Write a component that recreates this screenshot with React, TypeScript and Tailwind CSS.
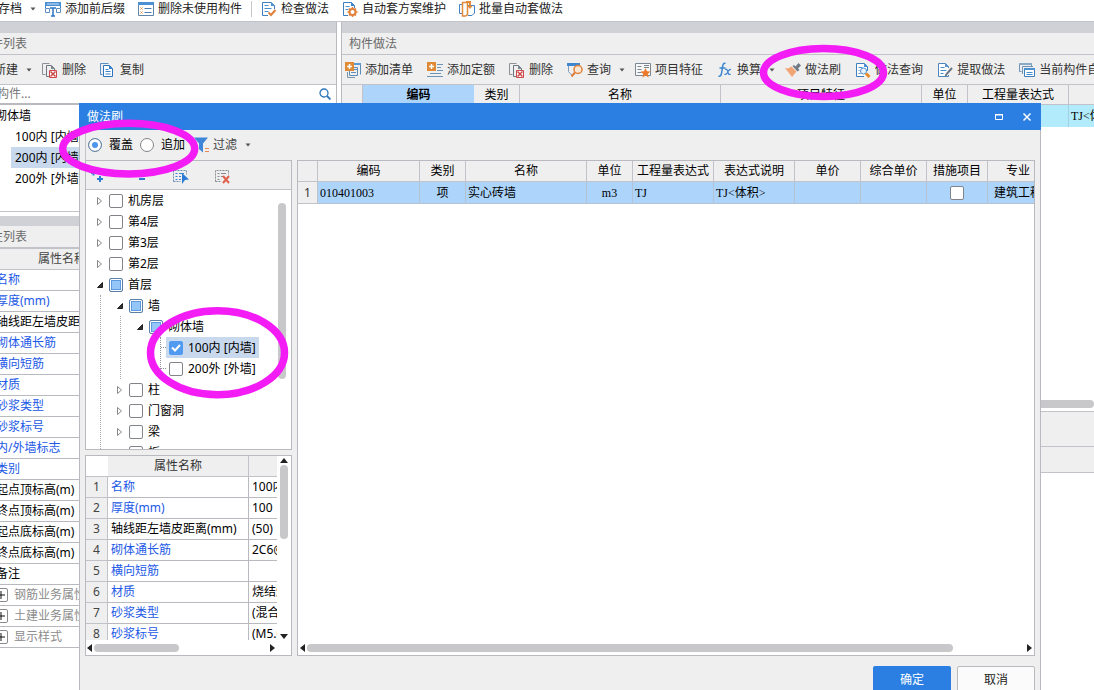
import { useState, type ReactNode } from "react";

interface TreeNode {
  label: string;
  state?: "checked" | "partial";
  selected?: boolean;
  leaf?: boolean;
  children?: TreeNode[];
}

const tree: TreeNode[] = [
  { label: "机房层" },
  { label: "第4层" },
  { label: "第3层" },
  { label: "第2层" },
  {
    label: "首层",
    state: "partial",
    children: [
      {
        label: "墙",
        state: "partial",
        children: [
          {
            label: "砌体墙",
            state: "partial",
            children: [
              { label: "100内 [内墙]", state: "checked", selected: true, leaf: true },
              { label: "200外 [外墙]", leaf: true },
            ],
          },
        ],
      },
      { label: "柱" },
      { label: "门窗洞" },
      { label: "梁" },
      { label: "板" },
    ],
  },
];

const sideProps = [
  { name: "名称", blue: true },
  { name: "厚度(mm)", blue: true },
  { name: "轴线距左墙皮距离(mm)", blue: false },
  { name: "砌体通长筋", blue: true },
  { name: "横向短筋", blue: true },
  { name: "材质", blue: true },
  { name: "砂浆类型", blue: true },
  { name: "砂浆标号", blue: true },
  { name: "内/外墙标志", blue: true },
  { name: "类别", blue: true },
  { name: "起点顶标高(m)", blue: false },
  { name: "终点顶标高(m)", blue: false },
  { name: "起点底标高(m)", blue: false },
  { name: "终点底标高(m)", blue: false },
  { name: "备注", blue: false },
];

const sideGroups = ["钢筋业务属性", "土建业务属性", "显示样式"];

const dialogProps = [
  { name: "名称", value: "100内 [内墙]", blue: true },
  { name: "厚度(mm)", value: "100", blue: true },
  { name: "轴线距左墙皮距离(mm)", value: "(50)", blue: false },
  { name: "砌体通长筋", value: "2C6@600", blue: true },
  { name: "横向短筋", value: "", blue: true },
  { name: "材质", value: "烧结煤矸石砖", blue: true },
  { name: "砂浆类型", value: "(混合砂浆)", blue: true },
  { name: "砂浆标号", value: "(M5.0)", blue: true },
];

function Icon({ children }: { children: ReactNode }) {
  return (
    <svg className="w-4 h-4 shrink-0" viewBox="0 0 16 16" fill="none" aria-hidden="true">
      {children}
    </svg>
  );
}

function Caret() {
  return (
    <svg className="w-1.5 h-1 ml-1 -mr-1 shrink-0" viewBox="0 0 6 4" aria-hidden="true">
      <path d="M0.5 0.5h5L3 3.5z" fill="#555" />
    </svg>
  );
}

const PrefixIcon = () => (
  <Icon>
    <path d="M0.500 7V1.500h15V7" stroke="#3f86c6" />
    <path d="M0 1h16v4H0z" fill="#4a90d2" />
    <path d="M2 3h12" stroke="#cfe3f5" />
    <path d="M0.500 7.500h4v4h-4zM11.500 7.500h4v4h-4z" stroke="#5b8fc0" />
    <path d="M5 7h6M8 7v8M6 15h4" stroke="#2c76c4" strokeWidth="1.500" />
  </Icon>
);

const UnusedIcon = () => (
  <Icon>
    <path d="M0.500 1.500h15v13H0.500z" fill="#fff" stroke="#5f86a8" />
    <path d="M0 1h16v3H0z" fill="#4a90d2" />
    <path d="M2.500 6.500l2 2m0-2l-2 2M2.500 10.500l2 2m0-2l-2 2" stroke="#e08a45" />
    <path d="M6.500 7.500h7M6.500 11.500h7" stroke="#4a7fb5" />
  </Icon>
);

const CheckDocIcon = () => (
  <Icon>
    <path d="M13.500 8V4.500L10 1.500H1.500v13H7" fill="#fff" stroke="#3f7fc0" />
    <path d="M10 1v4h4z" fill="#4a90d2" />
    <path d="M3.500 4.500h4M3.500 7.500h7M3.500 10.500h4" stroke="#4a8fd0" />
    <path d="M7.500 11.500l2.500 2.500 4.500-5" stroke="#e2803a" strokeWidth="2" />
  </Icon>
);

const GearDocIcon = () => (
  <Icon>
    <path d="M12.500 7V4.500L9.500 1.500h-8v13H6" fill="#fff" stroke="#3f7fc0" />
    <path d="M9 1v4h4z" fill="#3f86d0" />
    <path d="M3.500 5.500h4M3.500 8.500h3" stroke="#4a8fd0" />
    <circle cx="10.500" cy="11" r="3" stroke="#e2803a" strokeWidth="2" />
    <path d="M10.500 6v2M10.500 14v2M5.500 11h2M13.500 11h2M7 7.500l1.500 1.500M12.500 13l1.500 1.500M14 7.500L12.500 9M8.500 13L7 14.500" stroke="#e2803a" strokeWidth="1.500" />
  </Icon>
);

const BatchIcon = () => (
  <Icon>
    <path d="M3.500 3.500h-3v9h3M9 4.500h6.500V12l-2.500 2.500H9" stroke="#4383c4" />
    <path d="M3.500 1.500h5v12l-2 1.500h-3z" fill="#fff" stroke="#e08a3a" strokeWidth="1.500" />
    <path d="M7 1h4v4" stroke="#e08a3a" strokeWidth="2" />
    <path d="M8.500 5h5L11 8z" fill="#e08a3a" />
  </Icon>
);

const DeleteIcon = () => (
  <Icon>
    <path d="M3.500 12.500h-3v-11h7" stroke="#8b9299" />
    <path d="M4.500 14.500h3M4.500 14.500v-11h5l3 3V8" stroke="#6e7780" />
    <path d="M9 3v4h4z" fill="#7d8790" />
    <path d="M7.500 8.500h7v7h-7z" fill="#fff" stroke="#cc4a4a" />
    <path d="M8.500 9.500l5 5m0-5l-5 5" stroke="#cc4a4a" strokeWidth="1.500" />
  </Icon>
);

const CopyIcon = () => (
  <Icon>
    <path d="M2.500 12.500h-2v-11h8" stroke="#5b8fc5" />
    <path d="M3.500 3.500h6l3 3v8h-9z" fill="#fff" stroke="#2f73bd" />
    <path d="M5.500 7.500h3M5.500 9.500h5M5.500 12h5" stroke="#3c82cc" />
    <path d="M9 3v4h4z" fill="#3c82cc" />
  </Icon>
);

const AddListIcon = () => (
  <Icon>
    <path d="M9 2.500h6.500v10M4.500 9v4.500h8V5.500H9" stroke="#5c8db8" />
    <path d="M2.500 10v5.500H10" stroke="#7a93a8" />
    <path d="M9 7.500h3M6 10.500h5" stroke="#5c8db8" />
    <path d="M8 1h8v2H8z" fill="#5c9bd5" />
    <path d="M0 0h9v9H0z" fill="#e08a35" />
    <path d="M4.500 2v5M2 4.500h5" stroke="#fff" strokeWidth="1.500" />
  </Icon>
);

const AddQuotaIcon = () => (
  <Icon>
    <path d="M10 2.500h6M10 5.500h4M10 8.500h6M3 11.500h11M0 14.500h16" stroke="#6f93b5" />
    <path d="M0 0h9v9H0z" fill="#e08a35" />
    <path d="M4.500 2v5M2 4.500h5" stroke="#fff" strokeWidth="1.500" />
  </Icon>
);

const QueryIcon = () => (
  <Icon>
    <path d="M0 1h13v3H0z" fill="#3f86d0" />
    <path d="M1.500 4v5.500l2.500 3h1" stroke="#7b9cba" />
    <circle cx="11" cy="7.500" r="4" fill="#fbe7d6" stroke="#e0803a" strokeWidth="1.500" />
    <path d="M8 10.500L4.500 14.500" stroke="#e0803a" strokeWidth="2" />
  </Icon>
);

const FeatureIcon = () => (
  <Icon>
    <path d="M0.500 1.500h15v12H0.500z" fill="#f8f8f8" stroke="#7b8791" />
    <path d="M2.500 4.500h4M2.500 7.500h4M2.500 10.500h4M9 3.500h5M9 5.500h5" stroke="#7b8791" />
    <path d="M10.500 6l1.500 3.200 3.500.3-2.700 2.400.9 3.600-3.200-1.900-3.100 1.900.8-3.600L5.500 9.500 9 9.200z" fill="#ec7a2d" />
  </Icon>
);

const FxIcon = () => (
  <Icon>
    <path d="M8.500 1.500C6.500 .5 6 2.500 5.500 5L4.500 11.500c-.5 2.500-1.500 3-3 2.500M2.500 6h6" stroke="#3c86cf" strokeWidth="1.500" />
    <path d="M8 7.500c2-1 2.500 1 3 3s1.500 2.500 2.500 1.500M14 7.500c-2-.5-2.500 1.500-3.500 3S8.500 13 7.500 12" stroke="#3c86cf" strokeWidth="1.200" />
  </Icon>
);

const BrushIcon = () => (
  <Icon>
    <path d="M0 6l3 .5L6.500 4.500l5 5L7 15z" fill="#f2a574" />
    <path d="M7.500 4l1.500-1 1.500 1.500L13.500 1 16 3.500l-3 3L14.500 8l-2 1.500z" fill="#6f7a84" />
  </Icon>
);

const MethodQueryIcon = () => (
  <Icon>
    <path d="M12.500 9V4.500L9.500 1.500h-8v13H9" fill="#fff" stroke="#3f7fc0" />
    <path d="M9 1v4h4z" fill="#4a90d2" />
    <path d="M3.500 5.500h4M3.500 8.500h1M3.500 11.500h2" stroke="#4a8fd0" />
    <circle cx="8.500" cy="9" r="3" fill="#eaf3fc" stroke="#4a8fd0" />
    <path d="M11 11.500l3.500 3.500" stroke="#ec8a2d" strokeWidth="3" />
  </Icon>
);

const ExtractIcon = () => (
  <Icon>
    <path d="M11.500 6V4.500L8.500 1.500h-7v13h10V13" fill="#fff" stroke="#4f86bd" />
    <path d="M8 1v4h4z" fill="#5b93cc" />
    <path d="M3.500 5.500h4M3.500 8.500h6M3.500 11.500h3" stroke="#4a8fd0" />
    <path d="M15 6l-5 5.500-1.500 2.500" stroke="#6e7780" strokeWidth="2" />
  </Icon>
);

const CurrentIcon = () => (
  <Icon>
    <path d="M2.500 9.500h-2v-8h12v3" stroke="#6f93b5" />
    <path d="M0 1h13v2H0z" fill="#8aa9c6" />
    <path d="M3.500 12V4.500H14" stroke="#6f93b5" />
    <path d="M5.500 6.500h10v8h-10z" fill="#fff" stroke="#3f7fc0" />
    <path d="M5 6h11v2H5z" fill="#4a90d2" />
    <path d="M7.500 10.500h6M7.500 12.500h6" stroke="#4a8fd0" />
  </Icon>
);

const FilterIcon = () => (
  <Icon>
    <path d="M1 0.500h14L10 6.500v9L6 12V6.500z" fill="#3f86d8" />
    <path d="M12 11.500h4M12 14.500h4" stroke="#e8884c" />
  </Icon>
);

const SelectTreeIcon = () => (
  <Icon>
    <path d="M0.500 12.500v-11h13v4M0.500 12.500h7" stroke="#6b8fb0" strokeDasharray="2 1" />
    <path d="M2.500 4.500h2M6 4.500h5M2.500 7.500h2M6 7.500h2M2.500 10.500h2M6 10.500h2" stroke="#3f86d0" />
    <path d="M9 4l7 6.500-4 .5-3 4z" fill="#2c7cd6" />
  </Icon>
);

const ClearTreeIcon = () => (
  <Icon>
    <path d="M0.500 12.500v-11h13v4M0.500 12.500h6" stroke="#858b90" strokeDasharray="2 1" />
    <path d="M2.500 4.500h2M6 4.500h5M2.500 7.500h2M6 7.500h2M2.500 10.500h2" stroke="#858b90" />
    <path d="M8 7l6 7m0-7l-6 7" stroke="#e0604e" strokeWidth="2" />
  </Icon>
);

const ExpandIcon = () => (
  <Icon>
    <path d="M2 4h5M4.500 1.500v5" stroke="#2c7cd6" strokeWidth="2" />
    <path d="M8 10h6M11 7v6" stroke="#2c7cd6" strokeWidth="2" />
  </Icon>
);

const CollapseIcon = () => (
  <Icon>
    <path d="M8 10h6" stroke="#2c7cd6" strokeWidth="2" />
  </Icon>
);

function Tool({ icon, label, caret }: { icon?: ReactNode; label: string; caret?: boolean }) {
  return (
    <button type="button" className="flex items-center gap-1 shrink-0 whitespace-nowrap">
      {icon}
      <span>{label}</span>
      {caret && <Caret />}
    </button>
  );
}

function Arrow({ dir }: { dir: "left" | "right" | "up" | "down" }) {
  const paths = {
    left: "M6 0v8L1 4z",
    right: "M2 0v8l5-4z",
    up: "M0 6h8L4 1z",
    down: "M0 2h8L4 7z",
  };
  return (
    <svg className="w-2 h-2 shrink-0" viewBox="0 0 8 8" aria-hidden="true">
      <path d={paths[dir]} fill="#222" />
    </svg>
  );
}

function CheckBox({ state, label }: { state?: "checked" | "partial"; label?: string }) {
  const [checked, setChecked] = useState(state === "checked");
  return (
    <span className="grid shrink-0 place-items-center">
      <input
        type="checkbox"
        aria-label={label}
        checked={checked}
        onChange={(e) => setChecked(e.target.checked)}
        className={
          state === "partial"
            ? "[grid-area:1/1] appearance-none w-3.5 h-3.5 rounded-xs border border-[#5c80a8] bg-[#94c6fa] shadow-[inset_0_0_0_1px_#fff,inset_0_0_0_2px_#5c9ae0]"
            : "[grid-area:1/1] appearance-none w-3.5 h-3.5 rounded-xs border border-[#808488] bg-white checked:bg-[#519af2] checked:border-[#519af2]"
        }
      />
      {checked && (
        <svg className="[grid-area:1/1] w-2.5 h-2.5 pointer-events-none" viewBox="0 0 10 10" aria-hidden="true">
          <path d="M1 4.500l3 3L9 2" fill="none" stroke="#fff" strokeWidth="2" />
        </svg>
      )}
    </span>
  );
}

function TreeItem({ node }: { node: TreeNode }) {
  const leafParent = node.children?.some((c) => c.leaf);
  return (
    <li>
      <div className={node.leaf ? "flex items-center h-[21px]" : "flex items-center h-[21px] pl-2.5"}>
        {node.leaf ? (
          <span className="w-[5px] border-t border-dotted border-[#8a8f98]" />
        ) : (
          <svg className="w-2.5 h-2.5 shrink-0" viewBox="0 0 10 10" aria-hidden="true">
            {node.children ? (
              <path d="M6.500 2.500v5h-5z" fill="#333" stroke="#222" />
            ) : (
              <path d="M1.500 1.500v7l4-3.500z" fill="#fff" stroke="#888" />
            )}
          </svg>
        )}
        <label
          className={
            node.selected
              ? "flex items-center gap-[5px] h-[21px] px-[3px] bg-[#c8d9ee] whitespace-nowrap"
              : "flex items-center gap-[5px] h-[21px] px-[3px] whitespace-nowrap"
          }
        >
          <CheckBox state={node.state} />
          {node.label}
        </label>
      </div>
      {node.children && (
        <ul
          className={
            leafParent
              ? "ml-[34px] border-l border-dotted border-[#8a8f98]"
              : "ml-[14px] pl-[5px] border-l border-dotted border-[#a5a9ae]"
          }
        >
          {node.children.map((child) => (
            <TreeItem key={child.label} node={child} />
          ))}
        </ul>
      )}
    </li>
  );
}

function LeftColumn() {
  return (
    <div className="w-[369px] shrink-0 flex flex-col border-r border-[#b9babf]">
      <section>
        <div className="h-[11px] bg-[#d0d1d6]" />
        <h2 className="h-[22px] pl-[11px] flex items-center bg-[#efefef] border-b border-[#c2c3c8] text-[#6a6a6a]">
          构件列表
        </h2>
        <div className="h-[30px] pl-[26px] flex items-center gap-3.5 bg-[#efefef] border-b border-[#c2c3c8] text-[#333]">
          <Tool label="新建" caret />
          <Tool icon={<DeleteIcon />} label="删除" />
          <Tool icon={<CopyIcon />} label="复制" />
        </div>
        <div className="h-[20px] pl-[5px] pr-[5px] flex items-center border-b-2 border-[#b9babf]">
          <input
            type="text"
            aria-label="搜索构件"
            placeholder="搜索构件..."
            className="flex-1 min-w-0 outline-none placeholder:text-[#777]"
          />
          <svg className="w-3 h-3" viewBox="0 0 12 12" fill="none" stroke="#2c76b8" aria-hidden="true">
            <circle cx="5" cy="5" r="4" strokeWidth="1.300" />
            <path d="M8 8l3.500 3.500" strokeWidth="1.800" />
          </svg>
        </div>
        <ul className="pb-[22px] border-b border-[#c2c3c8] text-black">
          <li className="h-[21px] pl-[27px] flex items-center">砌体墙</li>
          <li className="h-[21px] pl-[47px] flex items-center">100内 [内墙]</li>
          <li className="h-[21px] ml-[43px] mr-[200px] pl-1 flex items-center bg-[#c8d9ee]">200内 [内墙]</li>
          <li className="h-[21px] pl-[47px] flex items-center">200外 [外墙]</li>
        </ul>
      </section>

      <section className="mt-1 flex-1">
        <div className="h-[10px] bg-[#d0d1d6]" />
        <h2 className="h-[23px] pl-[11px] flex items-center bg-[#efefef] border-b-2 border-[#c2c3c8] text-[#6a6a6a]">
          属性列表
        </h2>
        <table className="w-full table-fixed border-separate border-spacing-0">
          <thead>
            <tr>
              <th className="h-[21px] p-0 pl-[70px] text-left font-normal text-[#444] bg-[#efefef] border-b border-[#c2c3c8]">
                属性名称
              </th>
            </tr>
          </thead>
          <tbody>
            {sideProps.map((row) => (
              <tr key={row.name}>
                <td
                  className={
                    row.blue
                      ? "h-[21px] p-0 pl-7 border-b border-[#b9babf] text-[#2258e6] whitespace-nowrap"
                      : "h-[21px] p-0 pl-7 border-b border-[#b9babf] text-black whitespace-nowrap"
                  }
                >
                  {row.name}
                </td>
              </tr>
            ))}
            {sideGroups.map((name) => (
              <tr key={name}>
                <td className="h-[21px] p-0 pl-[26px] border-b border-[#b9babf] text-[#8c8c8c]">
                  <div className="flex items-center gap-1.5">
                    <button
                      type="button"
                      aria-label={name}
                      className="w-3.5 h-3.5 border border-[#8a8a8a] rounded-xs grid place-items-center"
                    >
                      <svg className="w-2 h-2" viewBox="0 0 8 8" aria-hidden="true">
                        <path d="M4 0v8M0 4h8" stroke="#111" />
                      </svg>
                    </button>
                    {name}
                  </div>
                </td>
              </tr>
            ))}
          </tbody>
        </table>
      </section>
    </div>
  );
}

function RightColumn() {
  const th = "h-[20px] p-0 font-normal border-r border-b border-[#c2c3c8]";
  const td = "h-[22px] p-0 border-r border-[#a5cfe0] bg-[#b2ebfb]";
  return (
    <div className="ml-1 flex-1 min-w-0 flex flex-col border-l border-[#b9babf]">
      <div className="h-[11px] bg-[#d0d1d6]" />
      <h2 className="h-[22px] pl-[7px] flex items-center bg-[#efefef] border-b border-[#c2c3c8] text-[#6a6a6a]">
        构件做法
      </h2>
      <div className="h-[30px] pl-[3px] flex items-center gap-3.5 overflow-hidden bg-[#efefef] border-b border-[#c2c3c8] text-[#333]">
        <Tool icon={<AddListIcon />} label="添加清单" />
        <Tool icon={<AddQuotaIcon />} label="添加定额" />
        <Tool icon={<DeleteIcon />} label="删除" />
        <Tool icon={<QueryIcon />} label="查询" caret />
        <Tool icon={<FeatureIcon />} label="项目特征" />
        <Tool icon={<FxIcon />} label="换算" caret />
        <Tool icon={<BrushIcon />} label="做法刷" />
        <Tool icon={<MethodQueryIcon />} label="做法查询" />
        <Tool icon={<ExtractIcon />} label="提取做法" />
        <Tool icon={<CurrentIcon />} label="当前构件自动套做法" />
      </div>
      <div className="h-[314px] overflow-hidden">
        <table className="w-[888px] table-fixed border-separate border-spacing-0 text-black">
          <colgroup>
            <col className="w-[21px]" />
            <col className="w-[111px]" />
            <col className="w-[46px]" />
            <col className="w-[201px]" />
            <col className="w-[201px]" />
            <col className="w-[46px]" />
            <col className="w-[101px]" />
            <col className="w-[161px]" />
          </colgroup>
          <thead className="bg-[#efefef]">
            <tr>
              <th className={th} />
              <th className="h-[20px] p-0 font-bold bg-[#add5fc] border-b border-[#c2c3c8]">编码</th>
              <th className={th}>类别</th>
              <th className={th}>名称</th>
              <th className={th}>项目特征</th>
              <th className={th}>单位</th>
              <th className={th}>工程量表达式</th>
              <th className={th}>表达式说明</th>
            </tr>
          </thead>
          <tbody>
            <tr className="font-['Liberation_Serif','Noto_Sans_CJK_SC',serif]">
              <td className={td} />
              <td className={td} />
              <td className={td} />
              <td className={td} />
              <td className={td} />
              <td className={td} />
              <td className={td} />
              <td className="h-[22px] p-0 pl-0.5 bg-[#b2ebfb]">TJ&lt;体积&gt;</td>
            </tr>
          </tbody>
        </table>
      </div>
      <div className="h-3 pt-px flex items-start">
        <div className="h-2 flex-1 rounded-full bg-[#c8c8ca]" />
      </div>
      <div className="h-[36px] bg-[#efefef] border-t border-b border-[#c2c3c8]" />
      <div className="h-[26px] bg-[#efefef] border-b border-[#c2c3c8]" />
    </div>
  );
}

function BrushDialog() {
  const th = "h-[21px] p-0 font-normal border-r border-b border-[#c2c3c8]";
  const td = "h-[22px] p-0 border-r border-b border-[#b4c3d4] whitespace-nowrap";
  return (
    <div
      role="dialog"
      aria-label="做法刷"
      className="absolute top-[103px] left-[79px] right-[53px] -bottom-3 flex flex-col bg-[#efefef] border-x border-b border-[#b9babf] text-black"
    >
      <div className="-mx-px h-[27px] shrink-0 pl-2 pr-2 flex items-center justify-between bg-[#2c7fe2] text-white">
        <h1 className="text-xs font-normal">做法刷</h1>
        <div className="flex items-center gap-4">
          <button type="button" aria-label="最大化" className="w-3 h-3">
            <svg className="w-3 h-3" viewBox="0 0 12 12" aria-hidden="true">
              <path d="M2.500 3.500h7v5h-7z" fill="none" stroke="#fff" />
              <path d="M2 3h8v1.500H2z" fill="#fff" />
            </svg>
          </button>
          <button type="button" aria-label="关闭" className="w-3 h-3">
            <svg className="w-3 h-3" viewBox="0 0 12 12" aria-hidden="true">
              <path d="M2.500 2.500l7 7m0-7l-7 7" stroke="#fff" strokeWidth="1.500" />
            </svg>
          </button>
        </div>
      </div>

      <div className="ml-[5px] mr-[5px] h-[30px] shrink-0 pl-0.5 flex items-center border-l border-[#c2c3c8]">
        <label className="flex items-center gap-[7px]">
          <input
            type="radio"
            name="mode"
            defaultChecked
            className="appearance-none w-3.5 h-3.5 rounded-full border border-[#6f8296] bg-white checked:bg-[#4a96ee] checked:shadow-[inset_0_0_0_3px_#fff]"
          />
          覆盖
        </label>
        <label className="ml-[7px] flex items-center gap-[7px]">
          <input
            type="radio"
            name="mode"
            className="appearance-none w-3.5 h-3.5 rounded-full border border-[#808488] bg-white checked:bg-[#4a96ee] checked:shadow-[inset_0_0_0_3px_#fff]"
          />
          追加
        </label>
        <div className="ml-2 text-[#444]">
          <Tool icon={<FilterIcon />} label="过滤" caret />
        </div>
      </div>

      <div className="flex-1 min-h-0 px-[5px] flex gap-[5px]">
        <div className="w-[207px] shrink-0 flex flex-col gap-[5px]">
          <div className="flex-1 min-h-0 flex flex-col border border-[#b9babf]">
            <div className="h-[29px] shrink-0 pl-[3px] pt-1 flex items-center gap-[26px] border-b border-[#c2c3c8]">
              <button type="button" aria-label="展开"><ExpandIcon /></button>
              <button type="button" aria-label="折叠"><CollapseIcon /></button>
              <button type="button" aria-label="选择"><SelectTreeIcon /></button>
              <button type="button" aria-label="清除"><ClearTreeIcon /></button>
            </div>
            <div className="flex-1 min-h-0 flex bg-white">
              <ul className="flex-1 overflow-hidden">
                {tree.map((node) => (
                  <TreeItem key={node.label} node={node} />
                ))}
              </ul>
              <div className="w-[13px] pt-[13px]">
                <div className="w-2 h-[176px] rounded-full bg-[#c8c8ca]" />
              </div>
            </div>
          </div>

          <div className="h-[201px] shrink-0 flex flex-col bg-white border border-[#b9babf]">
            <div className="flex-1 min-h-0 flex">
              <div className="flex-1 min-w-0 overflow-hidden">
                <table className="w-[263px] table-fixed border-separate border-spacing-0">
                  <colgroup>
                    <col className="w-[22px]" />
                    <col className="w-[141px]" />
                    <col className="w-[100px]" />
                  </colgroup>
                  <thead className="text-[#333]">
                    <tr>
                      <th className="h-[21px] p-0 border-b border-[#c2c3c8]" />
                      <th className="h-[21px] p-0 font-normal bg-[#efefef] border-r border-b border-[#c2c3c8]">
                        属性名称
                      </th>
                      <th className="h-[21px] p-0 bg-[#efefef] border-b border-[#c2c3c8]" />
                    </tr>
                  </thead>
                  <tbody>
                    {dialogProps.map((row, i) => (
                      <tr key={row.name}>
                        <th className="h-[21px] p-0 font-normal text-[#444] bg-[#efefef] border-r border-b border-[#c2c3c8]">
                          {i + 1}
                        </th>
                        <td
                          className={
                            row.blue
                              ? "h-[21px] p-0 pl-[3px] border-r border-b border-[#b9babf] text-[#2258e6] whitespace-nowrap"
                              : "h-[21px] p-0 pl-[3px] border-r border-b border-[#b9babf] whitespace-nowrap"
                          }
                        >
                          {row.name}
                        </td>
                        <td className="h-[21px] p-0 pl-[3px] border-b border-[#b9babf] whitespace-nowrap">
                          {row.value}
                        </td>
                      </tr>
                    ))}
                  </tbody>
                </table>
              </div>
              <div className="w-3.5 shrink-0 pt-px flex flex-col items-center">
                <Arrow dir="up" />
                <div className="w-2 h-[74px] rounded-full bg-[#c8c8ca]" />
                <div className="flex-1" />
                <Arrow dir="down" />
              </div>
            </div>
            <div className="h-[15px] shrink-0 pr-[15px] flex items-center">
              <Arrow dir="left" />
              <div className="w-[85px] h-2 rounded-full bg-[#c8c8ca]" />
              <div className="flex-1" />
              <Arrow dir="right" />
            </div>
          </div>
        </div>

        <div className="flex-1 min-w-0 flex flex-col bg-white border border-[#b9babf]">
          <div className="flex-1 min-h-0 overflow-hidden">
            <table className="w-[760px] table-fixed border-separate border-spacing-0">
              <colgroup>
                <col className="w-[20px]" />
                <col className="w-[102px]" />
                <col className="w-[46px]" />
                <col className="w-[121px]" />
                <col className="w-[46px]" />
                <col className="w-[81px]" />
                <col className="w-[81px]" />
                <col className="w-[66px]" />
                <col className="w-[66px]" />
                <col className="w-[61px]" />
                <col className="w-[70px]" />
              </colgroup>
              <thead className="bg-[#efefef] whitespace-nowrap">
                <tr>
                  <th className={th} />
                  <th className={th}>编码</th>
                  <th className={th}>类别</th>
                  <th className={th}>名称</th>
                  <th className={th}>单位</th>
                  <th className={th}>工程量表达式</th>
                  <th className={th}>表达式说明</th>
                  <th className={th}>单价</th>
                  <th className={th}>综合单价</th>
                  <th className={th}>措施项目</th>
                  <th className="h-[21px] p-0 pr-2.5 font-normal border-b border-[#c2c3c8]">专业</th>
                </tr>
              </thead>
              <tbody>
                <tr className="bg-[#add5fc] font-['Liberation_Serif','Noto_Sans_CJK_SC',serif]">
                  <th className="h-[22px] p-0 font-normal font-['Noto_Sans',sans-serif] text-[#333] bg-[#efefef] border-r border-b border-[#c2c3c8]">
                    1
                  </th>
                  <td className={`${td} pl-0.5`}>010401003</td>
                  <td className={`${td} text-center`}>项</td>
                  <td className={`${td} pl-0.5`}>实心砖墙</td>
                  <td className={`${td} text-center`}>m3</td>
                  <td className={`${td} pl-0.5`}>TJ</td>
                  <td className={`${td} pl-0.5`}>TJ&lt;体积&gt;</td>
                  <td className={td} />
                  <td className={td} />
                  <td className={td}>
                    <CheckBox label="措施项目" />
                  </td>
                  <td className="h-[22px] p-0 pl-1.5 border-b border-[#b4c3d4] whitespace-nowrap">建筑工程</td>
                </tr>
              </tbody>
            </table>
          </div>
          <div className="h-[15px] shrink-0 pl-px pr-px flex items-center">
            <Arrow dir="left" />
            <div className="flex-1 pr-[72px]">
              <div className="h-2 rounded-full bg-[#c8c8ca]" />
            </div>
            <Arrow dir="right" />
          </div>
        </div>
      </div>

      <div className="h-[45px] shrink-0 pt-2.5 px-[5px] flex justify-end items-start gap-1.5">
        <button type="button" className="w-[78px] h-7 rounded-xs bg-[#2c7fe2] text-white">
          确定
        </button>
        <button type="button" className="w-[78px] h-7 rounded-xs bg-[#fbfbfb] border border-[#b9babf] text-[#222]">
          取消
        </button>
      </div>
    </div>
  );
}

// Marker rings drawn over the window
function Rings() {
  return (
    <svg
      className="absolute top-0 left-0 w-[300px] h-[410px] overflow-visible pointer-events-none"
      fill="none"
      stroke="#f41cf4"
      strokeWidth="7.500"
      aria-hidden="true"
    >
      <ellipse cx="823.500" cy="72.500" rx="60" ry="24" />
      <ellipse cx="128.700" cy="148.600" rx="66" ry="25.300" />
      <ellipse cx="217.500" cy="352.700" rx="67" ry="42" />
    </svg>
  );
}

export default function App() {
  return (
    <main className="relative h-screen overflow-hidden bg-white text-xs font-['Noto_Sans','Noto_Sans_CJK_SC',sans-serif]">
      <div className="-ml-8 h-full flex flex-col">
        <div className="h-[22px] shrink-0 pl-[30px] pb-[3px] flex items-center gap-[13px] border-b border-[#c2c3c8] text-[#222]">
          <Tool label="存档" caret />
          <Tool icon={<PrefixIcon />} label="添加前后缀" />
          <Tool icon={<UnusedIcon />} label="删除未使用构件" />
          <div className="-mx-1 w-px h-4 bg-[#c8c8cc]" />
          <Tool icon={<CheckDocIcon />} label="检查做法" />
          <Tool icon={<GearDocIcon />} label="自动套方案维护" />
          <Tool icon={<BatchIcon />} label="批量自动套做法" />
        </div>
        <div className="flex-1 min-h-0 flex">
          <LeftColumn />
          <RightColumn />
        </div>
      </div>
      <BrushDialog />
      <Rings />
    </main>
  );
}
